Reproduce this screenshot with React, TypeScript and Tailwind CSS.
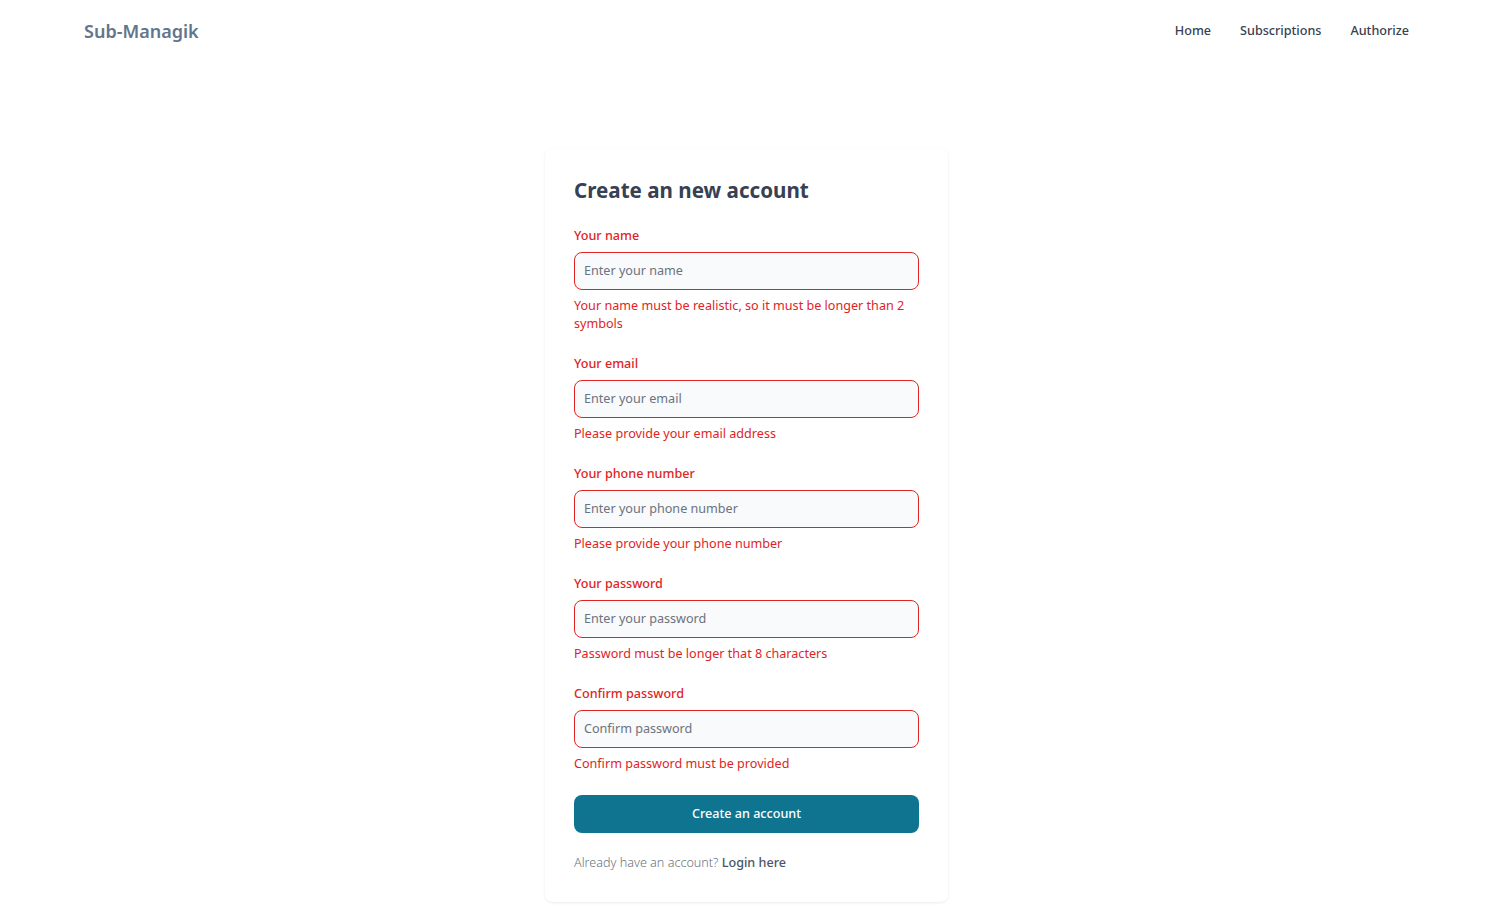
import React from 'react'

const fields = [
  {
    label: 'Your name',
    placeholder: 'Enter your name',
    type: 'text',
    error: 'Your name must be realistic, so it must be longer than 2 symbols',
  },
  {
    label: 'Your email',
    placeholder: 'Enter your email',
    type: 'email',
    error: 'Please provide your email address',
  },
  {
    label: 'Your phone number',
    placeholder: 'Enter your phone number',
    type: 'tel',
    error: 'Please provide your phone number',
  },
  {
    label: 'Your password',
    placeholder: 'Enter your password',
    type: 'password',
    error: 'Password must be longer that 8 characters',
  },
  {
    label: 'Confirm password',
    placeholder: 'Confirm password',
    type: 'password',
    error: 'Confirm password must be provided',
  },
]

function Header() {
  return (
    <header className="flex h-[62px] items-center justify-between pl-[84px] pr-[95px]">
      <a href="#" className="text-[18px] font-semibold text-[#64748b]">
        Sub-Managik
      </a>
      <nav className="flex gap-[29px] text-[12.6px] font-medium text-[#374151]">
        <a href="#">Home</a>
        <a href="#">Subscriptions</a>
        <a href="#">Authorize</a>
      </nav>
    </header>
  )
}

export default function App() {
  return (
    <div className="min-h-screen bg-white font-['Noto_Sans',sans-serif]">
      <Header />

      {/* 가입 카드 */}
      <main className="flex justify-center pr-[11px] pt-[86px]">
        <div className="w-[403px] rounded-lg bg-white px-[29px] pb-[30px] pt-[28px] shadow-[0_1px_3px_rgba(0,0,0,0.08)]">
          <h1 className="text-[20.6px] font-bold leading-[28px] text-[#374151]">Create an new account</h1>

          <form className="mt-[23px] flex flex-col gap-[22px]" onSubmit={(e) => e.preventDefault()}>
            {fields.map((f) => (
              <div key={f.label}>
                <label className="mb-[7px] block text-[12.6px] font-medium leading-[18px] text-[#e02424]">
                  {f.label}
                </label>
                <input
                  type={f.type}
                  placeholder={f.placeholder}
                  className="block h-[38px] w-full rounded-lg border border-[#e02424] bg-[#f9fafb] px-[9px] pb-[2px] text-[12.6px] text-gray-900 placeholder:text-[#6b7280] focus:outline-none"
                />
                <p className="mt-[7px] text-[12.6px] leading-[18px] text-[#e02424]">{f.error}</p>
              </div>
            ))}

            <button
              type="submit"
              className="h-[38px] w-full rounded-lg bg-[#0f7490] text-[12.6px] font-medium text-white"
            >
              Create an account
            </button>
          </form>

          <p className="mt-[21px] text-[12.6px] font-light leading-[18px] text-[#6b7280]">
            Already have an account?{' '}
            <a href="#" className="font-medium text-[#4b5563]">
              Login here
            </a>
          </p>
        </div>
      </main>
    </div>
  )
}
